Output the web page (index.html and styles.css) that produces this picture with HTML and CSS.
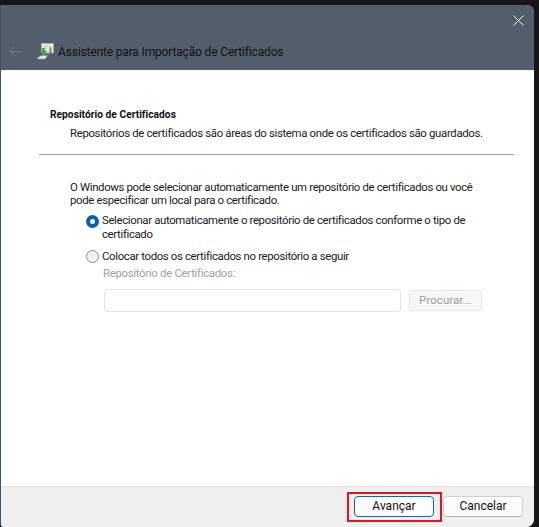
FILE: index.html
```html
<!DOCTYPE html>
<html lang="pt">
<head>
<meta charset="utf-8">
<title>Assistente para Importação de Certificados</title>
<link rel="stylesheet" href="styles.css">
</head>
<body>
<div class="window">
  <header class="titlebar">
    <div class="close-row">
      <svg class="close" width="11" height="11" viewBox="0 0 11 11"><path d="M.5.5l10 10M10.500.5l-10 10" stroke="#f2f4f6" stroke-width="1" fill="none"/></svg>
    </div>
    <div class="title-row">
      <svg class="back" width="13" height="11" viewBox="0 0 13 11"><path d="M12.500 5.500H1M5.500 1L1 5.500 5.500 10" stroke="#6b7682" stroke-width="1.200" fill="none"/></svg>
      <svg class="cert" width="17" height="17" viewBox="0 0 17 17">
        <path d="M4.500.500h12v9.500h-12z" fill="#eef0ea" stroke="#a9aea4" stroke-width=".8"/>
        <path d="M6.500 3h6M6.500 5h4" stroke="#b8bcb4" stroke-width=".8"/>
        <circle cx="13.500" cy="5.500" r="1.800" fill="#e0a030"/>
        <path d="M12.500 7h2v3h-2z" fill="#3b78c4"/>
        <path d="M5 5h3v3h2.500L6.500 12.500 2.500 8H5z" fill="#3fae3a"/>
        <path d="M0 15L4.500 12.500h6L8 16H2z" fill="#e4e6e2" stroke="#9a9e98" stroke-width=".5"/>
      </svg>
      <span class="title">Assistente para Importação de Certificados</span>
    </div>
  </header>
  <main class="content">
    <h1 class="heading">Repositório de Certificados</h1>
    <p class="subheading">Repositórios de certificados são áreas do sistema onde os certificados são guardados.</p>
    <hr class="rule">
    <p class="intro">O Windows pode selecionar automaticamente um repositório de certificados ou você<br>pode especificar um local para o certificado.</p>
    <div class="option first">
      <span class="radio checked"></span>
      <span class="label">Selecionar automaticamente o repositório de certificados conforme o tipo de<br>certificado</span>
    </div>
    <div class="option second">
      <span class="radio"></span>
      <span class="label">Colocar todos os certificados no repositório a seguir</span>
    </div>
    <div class="store-label">Repositório de Certificados:</div>
    <div class="store-row">
      <div class="store-input"></div>
      <div class="browse">Procurar...</div>
    </div>
  </main>
  <footer class="footer">
    <div class="next-wrap"><button class="btn primary">Avançar</button></div>
    <button class="btn">Cancelar</button>
  </footer>
</div>
</body>
</html>
```
FILE: styles.css
```css
* { box-sizing: border-box; }
html, body { margin: 0; height: 100%; }
body {
  background: #171717;
  padding: 5px 5px 0 0;
  overflow: hidden;
  font-family: Roboto, sans-serif;
  font-size: 11.400px;
  color: #1a1a1a;
}
.window {
  height: 522px;
  display: flex;
  flex-direction: column;
  border-left: 1px solid #3f5266;
  border-radius: 0 8px 8px 4px;
  overflow: hidden;
  background: #fff;
}
.titlebar {
  height: 65px;
  background: #525e6c;
  flex: none;
}
.close-row {
  height: 35px;
  display: flex;
  justify-content: flex-end;
  align-items: flex-start;
  padding: 10px 10px 0 0;
}
.title-row {
  display: flex;
  align-items: center;
  height: 22px;
  padding-left: 8px;
}
.back { margin-right: 15px; }
.cert { margin-right: 4px; }
.title {
  font-size: 12px;
  letter-spacing: -.16px;
  color: #111;
  margin-top: 2px;
}
.content {
  flex: 1;
  padding: 38px 20px 0 38px;
  line-height: 16px;
}
.heading {
  margin: 0 0 0 11px;
  font-size: 10.200px;
  letter-spacing: .03px;
  line-height: 13px;
  font-weight: 700;
  color: #111;
}
.subheading {
  margin: 4px 0 0 31px;
  letter-spacing: -.335px;
  white-space: nowrap;
}
.rule {
  margin: 13px 0 0 0;
  border: 0;
  height: 1px;
  background: #a0a0a0;
}
.intro {
  margin: 26px 0 0 31px;
  line-height: 13px;
  letter-spacing: -.345px;
  white-space: nowrap;
}
.option {
  display: flex;
  align-items: flex-start;
  margin-left: 47px;
  line-height: 14px;
  white-space: nowrap;
  letter-spacing: -.35px;
}
.first { margin-top: 6px; }
.second { margin-top: 8px; }
.label { margin-left: 3px; }
.radio {
  width: 13px;
  height: 13px;
  margin-top: 1px;
  flex: none;
  border-radius: 50%;
  border: 1px solid #8a8a8a;
  background: #f2f2f2;
}
.radio.checked {
  border: 4px solid #0a5fb0;
  background: #fff;
  margin-top: 2px;
}
.store-label {
  margin: 4px 0 0 64px;
  line-height: 13px;
  letter-spacing: -.3px;
  color: #a2a2a2;
}
.store-row {
  display: flex;
  margin: 9px 0 0 65px;
}
.store-input {
  width: 297px;
  height: 23px;
  background: #fff;
  border: 1px solid #e4e4e4;
  border-radius: 3px;
}
.browse {
  width: 73px;
  height: 21px;
  margin: 1px 0 0 8px;
  background: #f7f7f7;
  border: 1px solid #e6e6e6;
  border-radius: 3px;
  text-align: center;
  line-height: 19px;
  letter-spacing: .1px;
  color: #9c9c9c;
}
.footer {
  height: 41px;
  flex: none;
  background: #efefef;
  border-top: 1px solid #e2e2e2;
  display: flex;
  justify-content: flex-end;
  align-items: flex-start;
  padding: 9px 11px 0 0;
}
.next-wrap {
  margin: -4px 1px 0 0;
  padding: 2px 6px 2px 5px;
  border: 2px solid #e0141c;
  height: 30px;
  display: flex;
}
.btn {
  width: 80px;
  height: 21px;
  padding: 0;
  border: 1px solid #cfcfcf;
  border-bottom-color: #b4b4b4;
  border-radius: 4px;
  background: #fbfbfb;
  font: 12px/19px Roboto, sans-serif;
  color: #111;
}
.btn.primary {
  border: 1px solid #0a67c0;
  background: #fdfdfd;
}
```
